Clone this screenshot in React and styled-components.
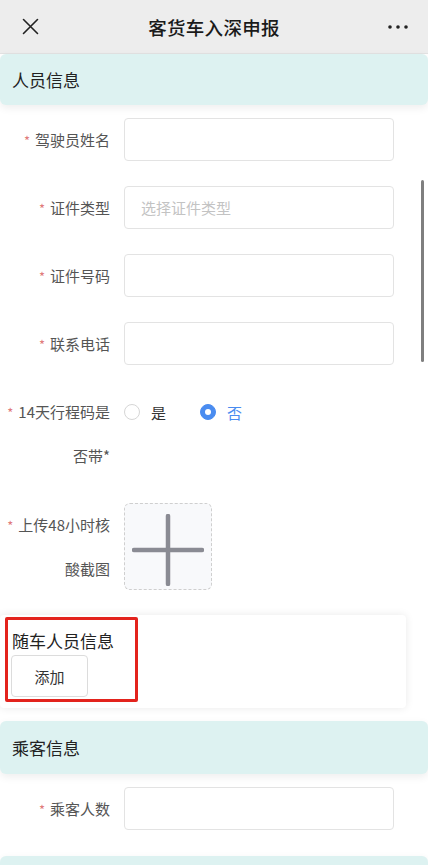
import React from 'react';
import styled, { createGlobalStyle } from 'styled-components';

const Global = createGlobalStyle`
  html, body { margin: 0; padding: 0; background: #fff; }
  body { font-family: "Noto Sans CJK SC", "Noto Sans", sans-serif; color: #333; }
  * { box-sizing: border-box; }
`;

const Page = styled.div`
  width: 428px;
  height: 865px;
  position: relative;
  overflow: hidden;
  background: #fff;
`;

const NavBar = styled.header`
  height: 54px;
  background: #ededed;
  border-bottom: 1px solid #e2e2e2;
  display: grid;
  grid-template-columns: 60px 1fr 60px;
  align-items: center;
`;

const NavLeft = styled.div`
  padding-left: 22px;
  display: flex;
  align-items: center;
`;

const NavRight = styled.div`
  padding-right: 20px;
  display: flex;
  justify-content: flex-end;
  align-items: center;
`;

const NavTitle = styled.h1`
  margin: 0;
  text-align: center;
  font-size: 18.5px;
  font-weight: 500;
  color: #1a1a1a;
  letter-spacing: 0.3px;
`;

const SectionHeader = styled.div`
  height: ${p => p.$h || 52}px;
  margin-top: ${p => p.$mt || 0}px;
  background: #ddf2f1;
  border-radius: 6px;
  box-shadow: 0 3px 8px rgba(0, 0, 0, 0.07);
  display: flex;
  align-items: center;
  padding-left: 12px;
  font-size: 17px;
  color: #222;
  position: relative;
`;

const Form = styled.div`
  display: flex;
  flex-direction: column;
  gap: 25px;
  padding-top: 13px;
`;

const Field = styled.div`
  display: flex;
  align-items: flex-start;
  gap: 14px;
  padding: 0 34px 0 5px;
`;

const Label = styled.label`
  width: 105px;
  height: ${p => (p.$lines || 1) * (p.$lh || 43)}px;
  flex: none;
  text-align: right;
  font-size: 15px;
  color: #555;
  line-height: ${p => p.$lh || 43}px;
`;

const Star = styled.span`
  color: #e07a7a;
  margin-right: 5px;
  font-size: 13px;
  line-height: 1;
`;

const Input = styled.div`
  flex: 1;
  height: 43px;
  border: 1px solid #e3e3e3;
  border-radius: 4px;
  background: #fff;
  display: flex;
  align-items: center;
  padding-left: 16px;
  font-size: 15px;
  color: #c3c3c3;
`;

const RadioGroup = styled.div`
  display: flex;
  align-items: center;
  height: 44px;
  gap: 34px;
`;

const RadioItem = styled.div`
  display: flex;
  align-items: center;
  gap: 11px;
  font-size: 15px;
  color: ${p => (p.$checked ? '#4a8cf0' : '#333')};
`;

const RadioCircle = styled.span`
  width: 16px;
  height: 16px;
  border-radius: 50%;
  border: 1px solid ${p => (p.$checked ? '#4a8cf0' : '#d6d6d6')};
  background: ${p => (p.$checked ? '#4a8cf0' : '#fff')};
  display: flex;
  align-items: center;
  justify-content: center;
  &::after {
    content: '';
    width: 6px;
    height: 6px;
    border-radius: 50%;
    background: ${p => (p.$checked ? '#fff' : 'transparent')};
  }
`;

const Upload = styled.div`
  width: 88px;
  height: 87px;
  border: 1px dashed #cfcfcf;
  border-radius: 6px;
  background: #f8f9fb;
  display: flex;
  align-items: center;
  justify-content: center;
`;

const Card = styled.div`
  width: 406px;
  margin-top: 24px;
  background: #fff;
  border-radius: 4px;
  box-shadow: 0 0 9px rgba(0, 0, 0, 0.09);
  padding: 2px 0 6px 5px;
`;

const Highlight = styled.div`
  width: 133px;
  border: 3px solid #e3231d;
  border-radius: 2px;
  padding: 9px 0 2px 3px;
`;

const CardTitle = styled.div`
  font-size: 17px;
  line-height: 24px;
  color: #222;
  padding-left: 1px;
`;

const Button = styled.button`
  margin-top: 2px;
  width: 77px;
  height: 42px;
  background: #fff;
  border: 1px solid #dcdcdc;
  border-radius: 4px;
  font-family: inherit;
  font-size: 15px;
  color: #333;
  display: block;
`;

const Scrollbar = styled.div`
  position: absolute;
  right: 4px;
  top: 180px;
  width: 3px;
  height: 182px;
  border-radius: 2px;
  background: #7f7f7f;
`;

const CloseIcon = () => (
  <svg width="17" height="17" viewBox="0 0 17 17">
    <path d="M1.5 1.5 L15.5 15.5 M15.5 1.5 L1.5 15.5" stroke="#222" strokeWidth="1.6" strokeLinecap="round" />
  </svg>
);

const MoreIcon = () => (
  <svg width="20" height="4" viewBox="0 0 20 4">
    <circle cx="2" cy="2" r="1.8" fill="#222" />
    <circle cx="10" cy="2" r="1.8" fill="#222" />
    <circle cx="18" cy="2" r="1.8" fill="#222" />
  </svg>
);

const PlusIcon = () => (
  <svg width="72" height="72" viewBox="0 0 72 72" style={{ marginTop: 6 }}>
    <path d="M36 2 L36 70 M2 36 L70 36" stroke="#8a8b93" strokeWidth="4.5" strokeLinecap="round" />
  </svg>
);

const Req = () => <Star>*</Star>;

export default function App() {
  return (
    <Page>
      <Global />
      <NavBar>
        <NavLeft><CloseIcon /></NavLeft>
        <NavTitle>客货车入深申报</NavTitle>
        <NavRight><MoreIcon /></NavRight>
      </NavBar>

      <SectionHeader $h={51}>人员信息</SectionHeader>

      <Form>
        <Field>
          <Label><Req />驾驶员姓名</Label>
          <Input />
        </Field>
        <Field>
          <Label><Req />证件类型</Label>
          <Input>选择证件类型</Input>
        </Field>
        <Field>
          <Label><Req />证件号码</Label>
          <Input />
        </Field>
        <Field>
          <Label><Req />联系电话</Label>
          <Input />
        </Field>
        <Field>
          <Label $lh={44} $lines={2}><Req />14天行程码是<br />否带*</Label>
          <RadioGroup>
            <RadioItem><RadioCircle />是</RadioItem>
            <RadioItem $checked><RadioCircle $checked />否</RadioItem>
          </RadioGroup>
        </Field>
        <Field>
          <Label $lh={44} $lines={2}><Req />上传48小时核<br />酸截图</Label>
          <Upload><PlusIcon /></Upload>
        </Field>
      </Form>

      <Card>
        <Highlight>
          <CardTitle>随车人员信息</CardTitle>
          <Button>添加</Button>
        </Highlight>
      </Card>

      <SectionHeader $mt={13} $h={53}>乘客信息</SectionHeader>

      <Form>
        <Field>
          <Label><Req />乘客人数</Label>
          <Input />
        </Field>
      </Form>

      <SectionHeader $mt={26} $h={53} />

      <Scrollbar />
    </Page>
  );
}
